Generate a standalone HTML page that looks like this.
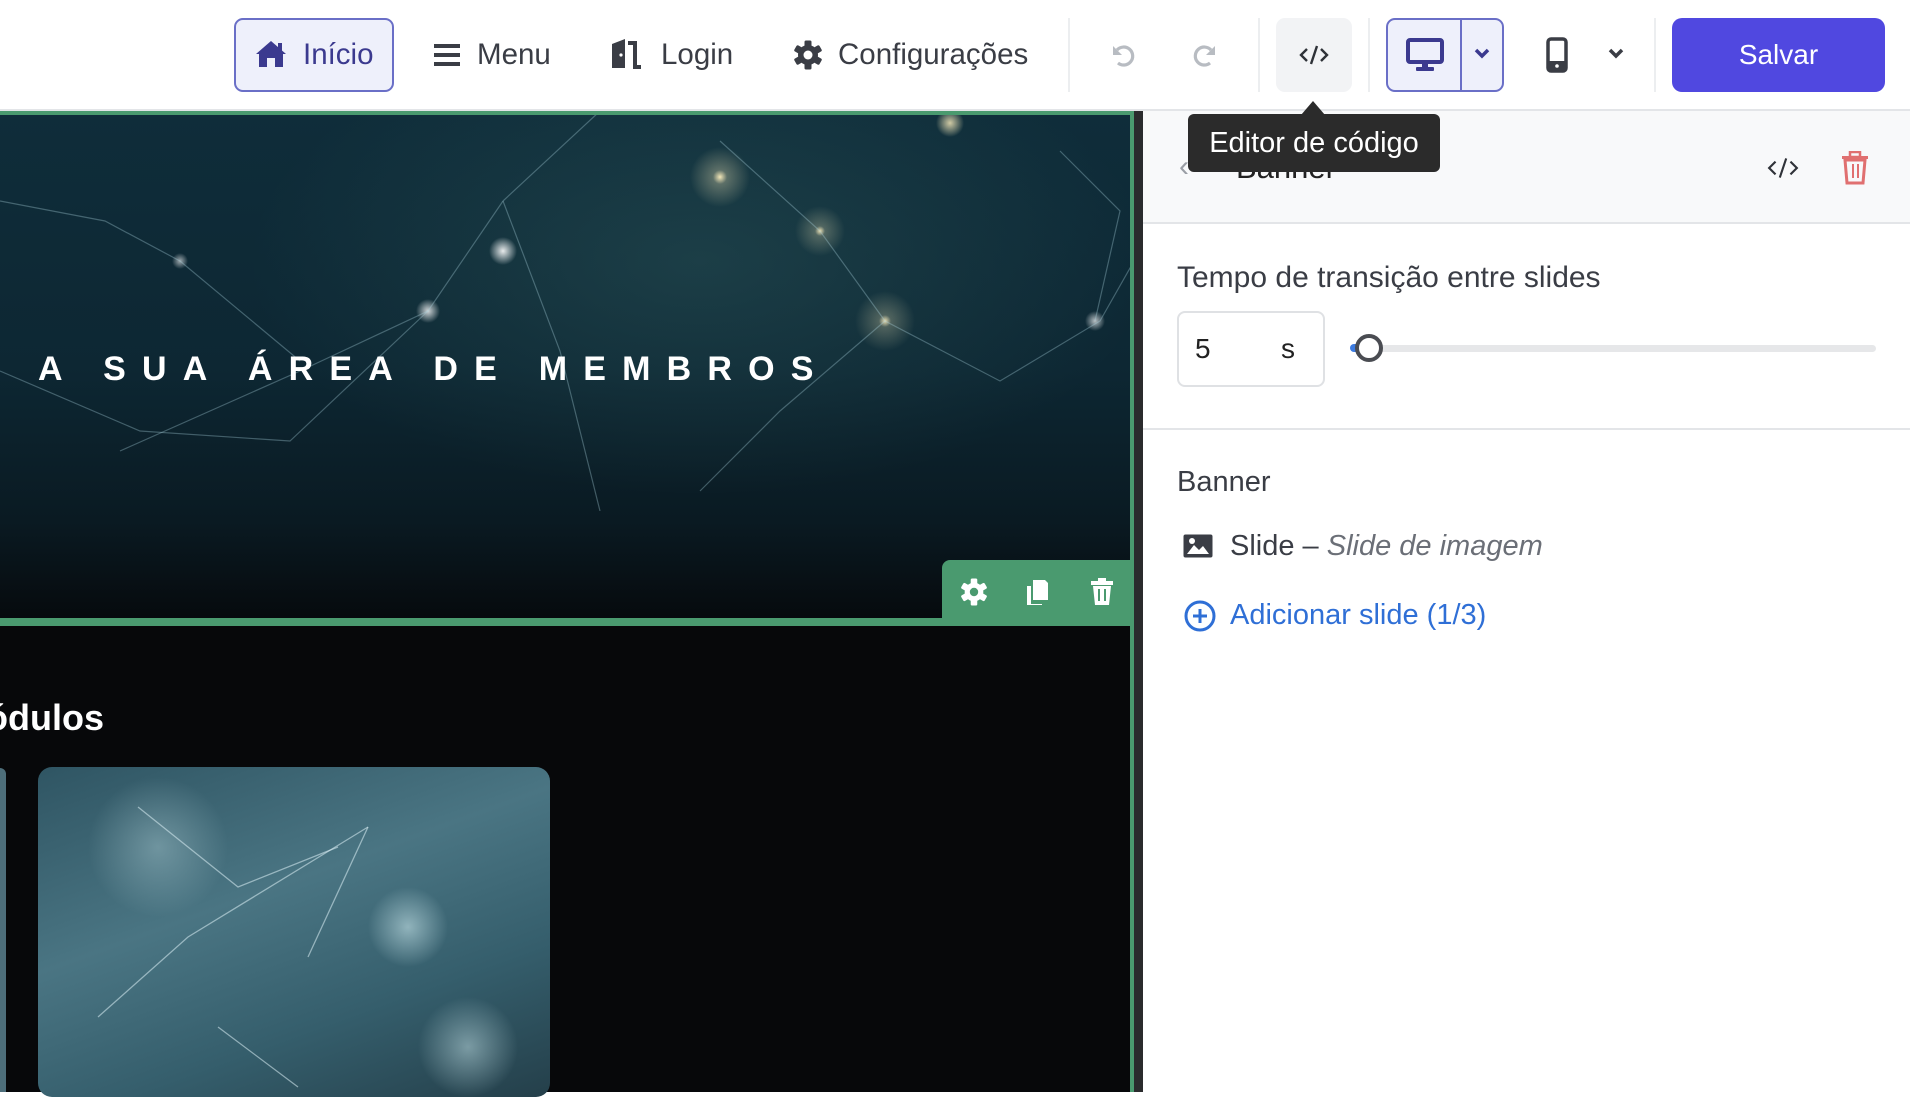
<!DOCTYPE html>
<html><head><meta charset="utf-8"><style>
*{box-sizing:border-box;margin:0;padding:0}
body{width:1910px;height:1092px;overflow:hidden;background:#fff;font-family:"Liberation Sans",sans-serif;position:relative}
.a{position:absolute}
.top{left:0;top:0;width:1910px;height:111px;background:#fff;border-bottom:2px solid #e3e5e8}
.div{top:18px;width:2px;height:74px;background:#eceef0}
.lbl{font-size:29.5px;color:#3a3d45}
</style></head><body>
<div class="a top"></div>
<div class="a" style="left:234px;top:18px;width:160px;height:74px;border:2px solid #6a6fc7;border-radius:9px;background:#eef0fb"></div>
<svg class="a" style="left:255px;top:40px" width="32" height="28" viewBox="0 0 32 28"><path d="M16 1 L1 14 L4 14 L4 27 L12 27 L12 18 L20 18 L20 27 L28 27 L28 14 L31 14 Z" fill="#3b3a8f"/><rect x="23" y="3" width="4" height="8" fill="#3b3a8f"/></svg>
<div class="a lbl" style="left:303px;top:38px;color:#3b3a8f">Início</div>
<svg class="a" style="left:434px;top:44px" width="26" height="22"><rect y="0" width="26" height="4" fill="#3a3d45"/><rect y="9" width="26" height="4" fill="#3a3d45"/><rect y="18" width="26" height="4" fill="#3a3d45"/></svg>
<div class="a lbl" style="left:477px;top:38px">Menu</div>
<svg class="a" style="left:609px;top:38px" width="36" height="32"><path d="M3 30 L3 6 L16 1 L16 30 Z" fill="#3a3d45"/><path d="M19 5 L26 5 L26 29 L32 29" stroke="#3a3d45" stroke-width="4" fill="none"/><circle cx="12" cy="17" r="1.6" fill="#fff"/></svg>
<div class="a lbl" style="left:661px;top:38px">Login</div>
<svg class="a" style="left:793px;top:40px" width="30" height="30" viewBox="-15 -15 30 30"><g fill="#3a3d45"><circle r="10"/><rect x="-3.5" y="-14.5" width="7" height="29" rx="1.5"/><rect x="-3.5" y="-14.5" width="7" height="29" rx="1.5" transform="rotate(60)"/><rect x="-3.5" y="-14.5" width="7" height="29" rx="1.5" transform="rotate(120)"/></g><circle r="4.5" fill="#fff"/></svg>
<div class="a lbl" style="left:838px;top:38px">Configurações</div>
<div class="a div" style="left:1068px"></div>
<svg class="a" style="left:1110px;top:42px" width="28" height="28" viewBox="0 0 28 28"><path d="M7 8 A9 9 0 1 1 8 21" stroke="#b8bcc2" stroke-width="3.2" fill="none"/><path d="M3 4 L3 13 L12 13 Z" fill="#b8bcc2"/></svg>
<svg class="a" style="left:1190px;top:42px" width="28" height="28" viewBox="0 0 28 28"><path d="M21 8 A9 9 0 1 0 20 21" stroke="#b8bcc2" stroke-width="3.2" fill="none"/><path d="M25 4 L25 13 L16 13 Z" fill="#b8bcc2"/></svg>
<div class="a div" style="left:1258px"></div>
<div class="a" style="left:1276px;top:18px;width:76px;height:74px;background:#f2f3f5;border-radius:9px"></div>
<svg class="a" style="left:1299px;top:44px" width="30" height="22" viewBox="0 0 30 22"><path d="M8 5 L2 11 L8 17 M22 5 L28 11 L22 17 M18 2 L12 20" stroke="#2f3238" stroke-width="2.4" fill="none"/></svg>
<div class="a div" style="left:1368px"></div>
<div class="a" style="left:1386px;top:18px;width:118px;height:74px;border:2px solid #6a6fc7;border-radius:9px;background:#eef0fb"></div>
<div class="a" style="left:1460px;top:18px;width:2px;height:74px;background:#6a6fc7"></div>
<svg class="a" style="left:1406px;top:38px" width="38" height="34" viewBox="0 0 38 34"><rect x="2" y="2" width="34" height="22" rx="2" stroke="#3b3a8f" stroke-width="4" fill="none"/><rect x="16" y="24" width="6" height="6" fill="#3b3a8f"/><rect x="10" y="29" width="18" height="4" rx="1" fill="#3b3a8f"/></svg>
<svg class="a" style="left:1474px;top:48px" width="16" height="12"><path d="M2 2 L8 8 L14 2" stroke="#3b3a8f" stroke-width="3.5" fill="none"/></svg>
<svg class="a" style="left:1546px;top:37px" width="22" height="36"><rect x="2" y="2" width="18" height="32" rx="3" stroke="#3a3d45" stroke-width="3.5" fill="none"/><rect x="2" y="24" width="18" height="10" fill="#3a3d45"/><circle cx="11" cy="29" r="1.8" fill="#fff"/></svg>
<svg class="a" style="left:1608px;top:48px" width="16" height="12"><path d="M2 2 L8 8 L14 2" stroke="#3a3d45" stroke-width="3.5" fill="none"/></svg>
<div class="a div" style="left:1654px"></div>
<div class="a" style="left:1672px;top:18px;width:213px;height:74px;background:#5048e0;border-radius:10px;color:#fff;font-size:28px;text-align:center;line-height:74px">Salvar</div>

<div class="a" style="left:0;top:111px;width:1143px;height:981px;background:#07080a"></div>
<div class="a" style="left:1134px;top:111px;width:9px;height:981px;background:#2a2b2d"></div>
<div class="a" style="left:0;top:111px;width:1134px;height:513px;background:
radial-gradient(circle at 720px 66px,rgba(255,240,190,.95) 0,rgba(255,240,190,.3) 7px,transparent 30px),
radial-gradient(circle at 820px 120px,rgba(255,240,190,.9) 0,rgba(255,240,190,.25) 5px,transparent 25px),
radial-gradient(circle at 885px 210px,rgba(255,240,190,.9) 0,rgba(255,240,190,.25) 6px,transparent 30px),
radial-gradient(circle at 503px 140px,rgba(255,255,255,.9) 0,transparent 14px),
radial-gradient(circle at 428px 200px,rgba(255,255,255,.8) 0,transparent 12px),
radial-gradient(circle at 950px 12px,rgba(255,240,190,.8) 0,transparent 14px),
radial-gradient(circle at 1095px 210px,rgba(255,255,255,.7) 0,transparent 10px),
radial-gradient(circle at 180px 150px,rgba(255,255,255,.6) 0,transparent 8px),
radial-gradient(ellipse at 700px 150px,rgba(60,110,110,.3) 0,transparent 450px),
linear-gradient(180deg,#0f2d3a 0%,#0d2733 50%,#0a1a22 80%,#06090c 100%)"></div>
<svg class="a" style="left:0;top:111px" width="1134" height="400"><g stroke="rgba(170,210,220,.35)" stroke-width="1.2" fill="none"><path d="M0 90 L105 110 L180 150 L300 250"/><path d="M503 90 L428 200 L300 260 L120 340"/><path d="M503 90 L560 240 L600 400"/><path d="M503 90 L600 0"/><path d="M720 30 L820 120 L885 210 L1000 270 L1100 210 L1134 150"/><path d="M885 210 L780 300 L700 380"/><path d="M1095 210 L1120 100 L1060 40"/><path d="M0 260 L140 320 L290 330 L428 200"/></g></svg>
<div class="a" style="left:38px;top:350px;font-size:34px;font-weight:bold;color:#fff;letter-spacing:16.2px;white-space:nowrap">A SUA ÁREA DE MEMBROS</div>
<div class="a" style="left:0;top:111px;width:1134px;height:4px;background:#4a9a6f"></div>
<div class="a" style="left:0;top:618px;width:1134px;height:8px;background:#4a9a6f"></div>
<div class="a" style="left:1130px;top:111px;width:4px;height:981px;background:#4a9a6f"></div>
<div class="a" style="left:942px;top:560px;width:192px;height:62px;background:#4a9a6f;border-radius:8px 0 0 0"></div>
<svg class="a" style="left:960px;top:578px" width="28" height="28" viewBox="-15 -15 30 30"><g fill="#fff"><circle r="10"/><rect x="-3.5" y="-14.5" width="7" height="29" rx="1.5"/><rect x="-3.5" y="-14.5" width="7" height="29" rx="1.5" transform="rotate(60)"/><rect x="-3.5" y="-14.5" width="7" height="29" rx="1.5" transform="rotate(120)"/></g><circle r="4.5" fill="#4a9a6f"/></svg>
<svg class="a" style="left:1025px;top:578px" width="24" height="28"><path d="M8 2 L20 2 L23 5 L23 22 L8 22 Z" fill="#fff"/><path d="M2 8 L6 8 L6 26 L17 26 L17 27 L2 27 Z" fill="#fff"/></svg>
<svg class="a" style="left:1090px;top:577px" width="24" height="30"><rect x="1" y="4" width="22" height="4" fill="#fff"/><rect x="8" y="1" width="8" height="4" fill="#fff"/><path d="M3 9 L21 9 L19 28 L5 28 Z" fill="#fff"/><rect x="8" y="12" width="2" height="12" fill="#4a9a6f"/><rect x="14" y="12" width="2" height="12" fill="#4a9a6f"/></svg>
<div class="a" style="left:-44px;top:697px;font-size:36px;font-weight:bold;color:#fff;white-space:nowrap">Módulos</div>
<div class="a" style="left:0;top:768px;width:6px;height:324px;background:#4d6e7a;border-radius:0 6px 0 0"></div>
<div class="a" style="left:38px;top:767px;width:512px;height:330px;border-radius:14px;background:
radial-gradient(circle at 370px 160px,rgba(200,230,235,.6) 0,transparent 40px),
radial-gradient(circle at 430px 280px,rgba(200,230,235,.5) 0,transparent 50px),
radial-gradient(circle at 120px 80px,rgba(200,230,235,.35) 0,transparent 70px),
linear-gradient(160deg,#2f5563 0%,#4a7583 40%,#355e6c 70%,#243f4a 100%)"></div>
<svg class="a" style="left:38px;top:767px" width="512" height="325"><g stroke="rgba(220,240,245,.55)" stroke-width="1.3" fill="none"><path d="M330 60 L150 170 L60 250"/><path d="M330 60 L270 190"/><path d="M100 40 L200 120 L300 80"/><path d="M180 260 L260 320"/></g></svg>

<div class="a" style="left:1143px;top:111px;width:767px;height:113px;background:#f8f9fa;border-bottom:2px solid #e3e5e8"></div>
<div class="a" style="left:1179px;top:150px;font-size:30px;color:#9a9ea5">‹</div>
<div class="a" style="left:1236px;top:150px;font-size:31px;color:#222">Banner</div>
<svg class="a" style="left:1767px;top:156px" width="32" height="24" viewBox="0 0 30 22"><path d="M8 5 L2 11 L8 17 M22 5 L28 11 L22 17 M18 2 L12 20" stroke="#2f3238" stroke-width="2" fill="none"/></svg>
<svg class="a" style="left:1841px;top:151px" width="28" height="34"><rect x="1" y="5" width="26" height="3" fill="#e07070"/><rect x="9" y="1" width="10" height="5" fill="none" stroke="#e07070" stroke-width="2.5"/><path d="M4 9 L24 9 L22 32 L6 32 Z" fill="none" stroke="#e07070" stroke-width="3"/><rect x="11" y="13" width="2" height="14" fill="#e07070"/><rect x="16" y="13" width="2" height="14" fill="#e07070"/></svg>
<div class="a" style="left:1188px;top:114px;width:252px;height:58px;background:#2b2b2b;border-radius:6px;color:#fff;font-size:29px;line-height:58px;text-align:center">Editor de código</div>
<div class="a" style="left:1301px;top:101px;width:0;height:0;border-left:12px solid transparent;border-right:12px solid transparent;border-bottom:14px solid #2b2b2b"></div>
<div class="a" style="left:1177px;top:261px;font-size:30px;color:#3a3d45">Tempo de transição entre slides</div>
<div class="a" style="left:1177px;top:311px;width:148px;height:76px;border:2px solid #dfe1e4;border-radius:8px"></div>
<div class="a" style="left:1195px;top:333px;font-size:28px;color:#222">5</div>
<div class="a" style="left:1281px;top:333px;font-size:28px;color:#222">s</div>
<div class="a" style="left:1352px;top:345px;width:524px;height:7px;background:#e6e7e9;border-radius:4px"></div>
<div class="a" style="left:1350px;top:344px;width:10px;height:8px;background:#3c7be0;border-radius:4px"></div>
<div class="a" style="left:1355px;top:334px;width:28px;height:28px;border:4px solid #4a4c52;border-radius:50%;background:#fff"></div>
<div class="a" style="left:1143px;top:428px;width:767px;height:2px;background:#e3e5e8"></div>
<div class="a" style="left:1177px;top:466px;font-size:29px;color:#3a3d45">Banner</div>
<svg class="a" style="left:1182px;top:533px" width="32" height="26"><rect x="1.5" y="1.5" width="29" height="23" rx="2" fill="#3a3d45"/><path d="M5 21 L12 12 L17 17 L21 13 L27 21 Z" fill="#fff"/><circle cx="10" cy="8" r="3" fill="#fff"/></svg>
<div class="a" style="left:1230px;top:530px;font-size:29px;color:#3a3d45">Slide – <i style="color:#6b6f77">Slide de imagem</i></div>
<svg class="a" style="left:1183px;top:599px" width="34" height="34"><circle cx="17" cy="17" r="14" fill="none" stroke="#2f6fd6" stroke-width="3"/><path d="M17 10 V24 M10 17 H24" stroke="#2f6fd6" stroke-width="3"/></svg>
<div class="a" style="left:1230px;top:599px;font-size:29px;color:#2f6fd6">Adicionar slide (1/3)</div>
</body></html>
